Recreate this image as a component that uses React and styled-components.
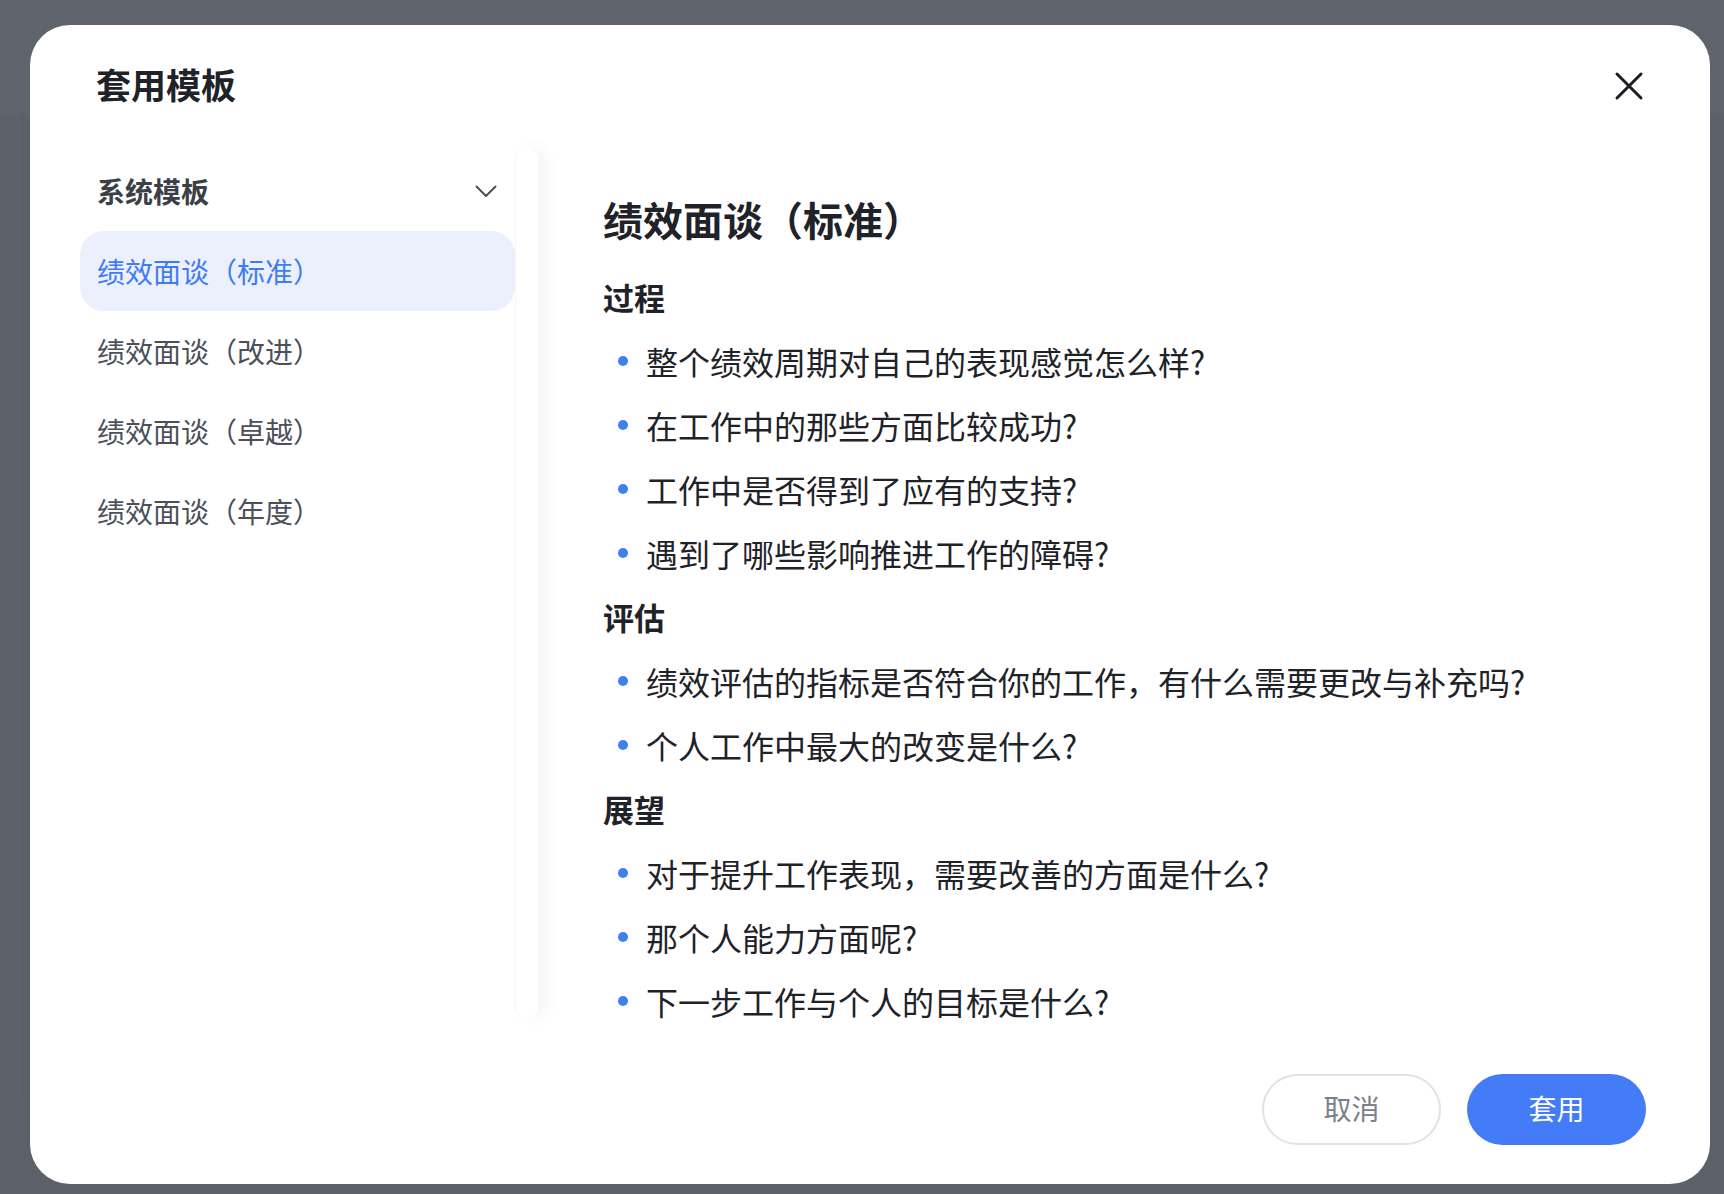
import React from "react";
import styled, { createGlobalStyle } from "styled-components";

const GlobalStyle = createGlobalStyle`
  html, body {
    margin: 0;
    padding: 0;
  }
  body {
    width: 1724px;
    height: 1194px;
    overflow: hidden;
    background: #5b6069;
    font-family: "Noto Sans CJK SC", "Noto Sans", sans-serif;
  }
`;

const Page = styled.div`
  position: relative;
  width: 1724px;
  height: 1194px;
  display: flex;
  flex-direction: column;
`;

const AppTopBar = styled.div`
  height: 115px;
  background: #5e636c;
`;

const AppBody = styled.div`
  flex: 1;
  display: flex;
`;

const AppSide = styled.div`
  width: 22px;
  height: 985px;
  border-right: 1px solid #575b64;
  background: #5d6169;
`;

const Modal = styled.div`
  position: absolute;
  left: 30px;
  top: 25px;
  width: 1680px;
  height: 1159px;
  background: #ffffff;
  border-radius: 40px;
  display: flex;
  flex-direction: column;
  box-sizing: border-box;
`;

const Header = styled.div`
  height: 122px;
  padding: 0 66px;
  display: flex;
  align-items: center;
  justify-content: space-between;
  flex-shrink: 0;
`;

const Title = styled.h1`
  margin: 0 0 4px;
  font-size: 35px;
  font-weight: 700;
  color: #1f2329;
  line-height: 48px;
`;

const CloseButton = styled.button`
  width: 30px;
  height: 30px;
  padding: 0;
  border: none;
  background: none;
  display: flex;
  align-items: center;
  justify-content: center;
  cursor: pointer;
`;

const Body = styled.div`
  display: flex;
  align-items: flex-start;
  padding-left: 50px;
  padding-top: 1px;
`;

const Sidebar = styled.div`
  display: flex;
  width: 458px;
  height: 870px;
  flex-shrink: 0;
`;

const TemplateList = styled.div`
  width: 436px;
  padding-top: 3px;
`;

const GroupHeader = styled.div`
  height: 80px;
  display: flex;
  align-items: center;
  justify-content: space-between;
  padding: 0 18px 0 17px;
  font-size: 28px;
  font-weight: 700;
  color: #3b3f47;
`;

const TemplateItem = styled.div`
  height: 80px;
  display: flex;
  align-items: center;
  padding-left: 17px;
  border-radius: 24px;
  font-size: 28px;
  color: ${(p) => (p.active ? "#3f7bf4" : "#4b505b")};
  background: ${(p) => (p.active ? "#ebf0fc" : "transparent")};
  cursor: pointer;
`;

const ScrollTrack = styled.div`
  width: 22px;
  height: 870px;
  border-radius: 12px;
  background: #ffffff;
  border-left: 1px solid #f4f5f7;
  box-shadow: 8px 0 16px rgba(40, 50, 90, 0.05);
`;

const Content = styled.div`
  margin-left: 65px;
  padding-top: 43px;
  color: #1f2329;
`;

const ContentTitle = styled.h2`
  margin: 0 0 18px;
  font-size: 40px;
  font-weight: 700;
  line-height: 56px;
`;

const SectionTitle = styled.h3`
  margin: 0;
  font-size: 31px;
  font-weight: 700;
  line-height: 64px;
`;

const Questions = styled.ul`
  list-style: none;
  margin: 0;
  padding: 0;
`;

const Question = styled.li`
  display: flex;
  align-items: center;
  height: 64px;
  padding-left: 15px;
  font-size: 32px;
  color: #1f2329;

  &::before {
    content: "";
    width: 10px;
    height: 10px;
    border-radius: 50%;
    background: #3f7ef5;
    margin-right: 18px;
    flex-shrink: 0;
  }
`;

const Footer = styled.div`
  display: flex;
  justify-content: flex-end;
  gap: 26px;
  padding: 0 64px 39px;
  margin-top: auto;
`;

const Button = styled.button`
  width: 179px;
  height: 71px;
  border-radius: 36px;
  font-family: inherit;
  font-size: 28px;
  line-height: 1;
  padding: 0 0 3px;
  cursor: pointer;
  box-sizing: border-box;
  border: ${(p) => (p.primary ? "none" : "2px solid #dfe2e8")};
  background: ${(p) => (p.primary ? "#437cf6" : "#ffffff")};
  color: ${(p) => (p.primary ? "#ffffff" : "#7b808a")};
`;

const sections = [
  {
    title: "过程",
    items: [
      "整个绩效周期对自己的表现感觉怎么样?",
      "在工作中的那些方面比较成功?",
      "工作中是否得到了应有的支持?",
      "遇到了哪些影响推进工作的障碍?",
    ],
  },
  {
    title: "评估",
    items: [
      "绩效评估的指标是否符合你的工作，有什么需要更改与补充吗?",
      "个人工作中最大的改变是什么?",
    ],
  },
  {
    title: "展望",
    items: [
      "对于提升工作表现，需要改善的方面是什么?",
      "那个人能力方面呢?",
      "下一步工作与个人的目标是什么?",
    ],
  },
];

const templates = [
  "绩效面谈（标准）",
  "绩效面谈（改进）",
  "绩效面谈（卓越）",
  "绩效面谈（年度）",
];

export default function App() {
  return (
    <>
      <GlobalStyle />
      <Page>
        <AppTopBar />
        <AppBody>
          <AppSide />
        </AppBody>
        <Modal>
          <Header>
            <Title>套用模板</Title>
            <CloseButton>
              <svg width="30" height="30" viewBox="0 0 30 30">
                <path
                  d="M3 3 L27 27 M27 3 L3 27"
                  stroke="#1a1d22"
                  strokeWidth="3"
                  strokeLinecap="round"
                />
              </svg>
            </CloseButton>
          </Header>
          <Body>
            <Sidebar>
              <TemplateList>
                <GroupHeader>
                  <span>系统模板</span>
                  <svg width="22" height="13" viewBox="0 0 22 13">
                    <path
                      d="M1.5 1.5 L11 11 L20.5 1.5"
                      fill="none"
                      stroke="#4b505b"
                      strokeWidth="2"
                      strokeLinecap="round"
                      strokeLinejoin="round"
                    />
                  </svg>
                </GroupHeader>
                {templates.map((t, i) => (
                  <TemplateItem key={t} active={i === 0}>
                    {t}
                  </TemplateItem>
                ))}
              </TemplateList>
              <ScrollTrack />
            </Sidebar>
            <Content>
              <ContentTitle>绩效面谈（标准）</ContentTitle>
              {sections.map((s) => (
                <div key={s.title}>
                  <SectionTitle>{s.title}</SectionTitle>
                  <Questions>
                    {s.items.map((q) => (
                      <Question key={q}>{q}</Question>
                    ))}
                  </Questions>
                </div>
              ))}
            </Content>
          </Body>
          <Footer>
            <Button>取消</Button>
            <Button primary>套用</Button>
          </Footer>
        </Modal>
      </Page>
    </>
  );
}
